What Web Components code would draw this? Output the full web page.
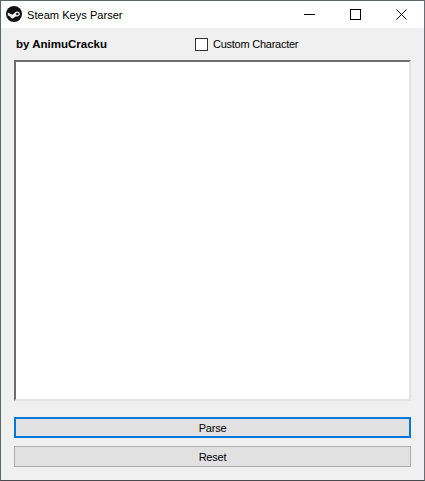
<!DOCTYPE html>
<html>
<head>
<meta charset="utf-8">
<title>Steam Keys Parser</title>
<style>
  html, body { margin: 0; padding: 0; background: #f0f0f0; overflow: hidden; }
</style>
</head>
<body>
<app-window caption="Steam Keys Parser">
  <tool-row>
    <b slot="author">by AnimuCracku</b>
    <check-box slot="option">Custom Character</check-box>
  </tool-row>
  <key-area></key-area>
  <win-button focused>Parse</win-button>
  <win-button>Reset</win-button>
</app-window>

<script>
class AppWindow extends HTMLElement {
  constructor() {
    super()
    this.attachShadow({ mode: 'open' })
  }

  connectedCallback() {
    const caption = this.getAttribute('caption')

    this.shadowRoot.innerHTML = `
      <style>
        :host {
          display: flex;
          flex-direction: column;
          box-sizing: border-box;
          width: 425px;
          height: 481px;
          background: #f0f0f0;
          border: 1px solid #5f6468;
          border-right-color: #6a6e72;
          border-bottom-color: #4a4a4c;
          font: 11px "Liberation Sans", Arial, sans-serif;
          color: #000;
        }

        .titlebar {
          display: flex;
          align-items: center;
          flex: none;
          height: 27px;
          background: #fff;
        }

        .logo {
          display: block;
          margin-left: 5px;
          margin-top: -1px;
          width: 16px;
          height: 16px;
        }

        .caption {
          margin-left: 5px;
          flex: 1;
          font-size: 11.1px;
        }

        .controls {
          display: flex;
          height: 100%;
        }

        .controls span {
          display: flex;
          align-items: center;
          justify-content: center;
          width: 46px;
        }

        .client {
          display: flex;
          flex-direction: column;
          flex: 1;
          padding: 0 13px;
        }
      </style>

      <div class="titlebar">
        <svg class="logo" viewBox="0 0 16 16">
          <circle cx="8" cy="8" r="8" fill="#111"/>
          <path d="M1.8 6.6 L6.4 8.8 L9 6.6 Q10 5.4 11.4 5.4 Q13.8 5.6 14 8 Q13.6 10.4 11.4 10.5 L9.8 10.5 L6.6 12.6 Q4.6 12.6 4.2 10.6 L1.8 9.4 Z" fill="#f2f2f2"/>
          <circle cx="11.3" cy="8" r="1.2" fill="#111"/>
        </svg>
        <span class="caption">${caption}</span>
        <div class="controls">
          <span><svg width="11" height="11"><path d="M0 5.5H11" stroke="#000" fill="none"/></svg></span>
          <span><svg width="11" height="11"><rect x=".5" y=".5" width="10" height="10" stroke="#000" fill="none"/></svg></span>
          <span><svg width="11" height="11"><path d="M.5 .5L10.5 10.5M10.5 .5L.5 10.5" stroke="#000" fill="none"/></svg></span>
        </div>
      </div>
      <div class="client"><slot></slot></div>
    `
  }
}

class ToolRow extends HTMLElement {
  constructor() {
    super()
    this.attachShadow({ mode: 'open' })
    this.shadowRoot.innerHTML = `
      <style>
        :host {
          display: flex;
          align-items: center;
          flex: none;
          height: 32px;
        }

        .author {
          display: block;
          width: 179px;
          padding-left: 2px;
          font-size: 11.5px;
        }
      </style>

      <span class="author"><slot name="author"></slot></span>
      <slot name="option"></slot>
    `
  }
}

class CheckBox extends HTMLElement {
  constructor() {
    super()
    this.attachShadow({ mode: 'open' })
    this.shadowRoot.innerHTML = `
      <style>
        :host {
          display: flex;
          align-items: center;
          gap: 5px;
          font-size: 11px;
          letter-spacing: -0.25px;
        }

        .box {
          box-sizing: border-box;
          width: 13px;
          height: 13px;
          background: #fff;
          border: 1px solid #333;
        }
      </style>

      <span class="box"></span>
      <slot></slot>
    `
  }
}

class KeyArea extends HTMLElement {
  constructor() {
    super()
    this.attachShadow({ mode: 'open' })
    this.shadowRoot.innerHTML = `
      <style>
        :host {
          display: block;
          flex: none;
          box-sizing: border-box;
          height: 341px;
          margin-bottom: 16px;
          background: #fff;
          border: 2px solid;
          border-color: #6d6d6d #e3e3e3 #e3e3e3 #6d6d6d;
        }
      </style>
    `
  }
}

class WinButton extends HTMLElement {
  constructor() {
    super()
    this.attachShadow({ mode: 'open' })
    this.shadowRoot.innerHTML = `
      <style>
        :host {
          display: flex;
          align-items: center;
          justify-content: center;
          flex: none;
          box-sizing: border-box;
          height: 21px;
          margin-bottom: 8px;
          background: #e1e1e1;
          border: 1px solid #adadad;
          font-size: 11px;
          letter-spacing: -0.2px;
        }

        :host([focused]) {
          border: 2px solid #0078d7;
        }
      </style>

      <slot></slot>
    `
  }
}

customElements.define('app-window', AppWindow)
customElements.define('tool-row', ToolRow)
customElements.define('check-box', CheckBox)
customElements.define('key-area', KeyArea)
customElements.define('win-button', WinButton)
</script>
</body>
</html>
